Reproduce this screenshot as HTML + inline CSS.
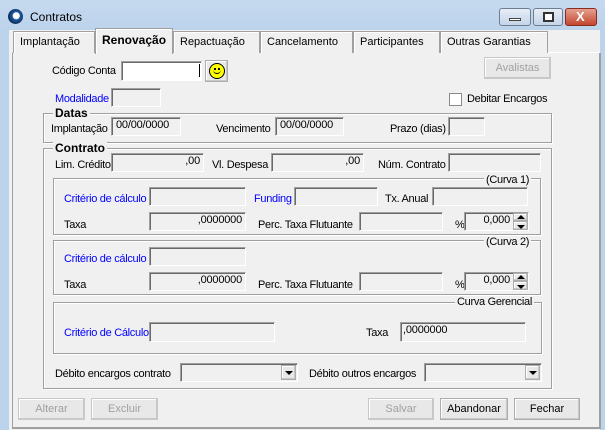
<!DOCTYPE html>
<html><head><meta charset="utf-8"><style>
*{box-sizing:border-box;margin:0;padding:0}
body{width:605px;height:430px;overflow:hidden;background:#bcd3ec;font-family:"Liberation Sans",sans-serif;font-size:11px;color:#000;position:relative}
div,span{position:absolute}
.t{white-space:nowrap;line-height:13px;letter-spacing:-0.3px}
.b{color:#0000ff}
.box{border:1px solid;border-color:#a0a0a0 #fff #fff #a0a0a0;box-shadow:inset 1px 1px 0 #696969;background:#f0f0f0;text-align:right;padding-right:3px;line-height:14px;letter-spacing:-0.2px}
.grp{border:1px solid #a0a0a0;box-shadow:1px 1px 0 #fff,inset 1px 1px 0 #fff}
.btn{border:1px solid #adadad;background:#e8e8e8;text-align:center;line-height:20px;box-shadow:inset -1px -1px 0 #c8c8c8,inset 1px 1px 0 #fff}
.dis{color:#a0a0a0;border-color:#c8c8c8}
.tab{top:31px;height:22px;border:1px solid #a0a0a0;border-bottom:none;background:#f0f0f0;padding:4px 0 0 6px;white-space:nowrap;box-shadow:inset 1px 1px 0 #fff}
.wb{top:8px;height:18px;border:1px solid #6d7d92;border-radius:3px;background:linear-gradient(#e7eef7,#c4d4e8)}
.arr{width:0;height:0;border-left:4px solid transparent;border-right:4px solid transparent}
.lg{background:#f0f0f0;padding:0 2px}
</style></head><body>
<div style="left:0;top:0;width:605px;height:30px;background:linear-gradient(#c6d9ef,#bcd3ec)"></div>
<div style="left:8px;top:9px;width:15px;height:15px;border-radius:50%;background:radial-gradient(circle at 55% 45%,#fff 0 3px,#1e5a9e 4px,#0c2c5a 8px)"></div>
<span class="t" style="left:30px;top:11px;font-size:12px;letter-spacing:0">Contratos</span>
<div class="wb" style="left:499px;width:32px"><div style="left:9px;top:9px;width:12px;height:3px;background:#fff;border:1px solid #444"></div></div>
<div class="wb" style="left:533px;width:30px"><div style="left:9px;top:3px;width:11px;height:10px;border:2px solid #333;background:#fff"></div></div>
<div class="wb" style="left:565px;width:32px;border-color:#8b2b20;background:linear-gradient(#e5a08f,#c4452f)"><span class="t" style="left:10px;top:1px;color:#fff;font-weight:bold;font-size:13px">X</span></div>
<div style="left:9px;top:30px;width:591px;height:400px;background:#f0f0f0"></div>
<div style="left:12px;top:52px;width:589px;height:377px;border:1px solid #a0a0a0;border-top-color:#fff;box-shadow:inset -1px -1px 0 #a0a0a0"></div>
<div class="tab" style="left:13px;width:82px;padding-left:6px">Implantação</div>
<div class="tab" style="left:173px;width:87px">Repactuação</div>
<div class="tab" style="left:260px;width:93px">Cancelamento</div>
<div class="tab" style="left:353px;width:87px">Participantes</div>
<div class="tab" style="left:440px;width:108px">Outras Garantias</div>
<div class="tab" style="left:95px;top:28px;height:26px;width:78px;font-weight:bold;padding-left:6px;font-size:12px;padding-top:4px">Renovação</div>

<span class="t" style="left:52px;top:65px">Código Conta</span>
<div style="left:121px;top:61px;width:81px;height:20px;background:#fff;border:1px solid;border-color:#a0a0a0 #fff #fff #a0a0a0;box-shadow:inset 1px 1px 0 #696969"></div>
<div style="left:199px;top:64px;width:1px;height:13px;background:#000"></div>
<div class="btn" style="left:205px;top:60px;width:23px;height:22px"><div style="left:3px;top:2px;width:16px;height:16px;border-radius:50%;background:#ff0;border:1px solid #000"><div style="left:4px;top:4px;width:2px;height:2px;background:#000"></div><div style="left:8px;top:4px;width:2px;height:2px;background:#000"></div><div style="left:3px;top:5px;width:8px;height:5px;border-bottom:1px solid #000;border-radius:0 0 5px 5px"></div></div></div>
<div class="btn dis" style="left:484px;top:57px;width:67px;height:22px">Avalistas</div>

<span class="t b" style="left:55px;top:93px">Modalidade</span>
<div class="box" style="left:111px;top:88px;width:50px;height:19px"></div>
<div style="left:449px;top:93px;width:13px;height:13px;background:#fff;border:1px solid #8a8a8a"></div>
<span class="t" style="left:467px;top:93px">Debitar Encargos</span>

<div class="grp" style="left:43px;top:113px;width:509px;height:30px"></div>
<span class="t lg" style="left:53px;top:107px;font-weight:bold;font-size:12px;letter-spacing:0">Datas</span>
<span class="t" style="left:51px;top:123px">Implantação</span>
<div class="box" style="left:111px;top:117px;width:70px;height:19px;text-align:left;padding-left:4px">00/00/0000</div>
<span class="t" style="left:216px;top:123px">Vencimento</span>
<div class="box" style="left:275px;top:117px;width:69px;height:19px;text-align:left;padding-left:4px">00/00/0000</div>
<span class="t" style="left:390px;top:123px">Prazo (dias)</span>
<div class="box" style="left:448px;top:117px;width:37px;height:19px"></div>

<div class="grp" style="left:43px;top:148px;width:509px;height:241px"></div>
<span class="t lg" style="left:53px;top:142px;font-weight:bold;font-size:12px;letter-spacing:0">Contrato</span>
<span class="t" style="left:55px;top:159px">Lim. Crédito</span>
<div class="box" style="left:111px;top:153px;width:93px;height:19px">,00</div>
<span class="t" style="left:212px;top:159px">Vl. Despesa</span>
<div class="box" style="left:271px;top:153px;width:93px;height:19px">,00</div>
<span class="t" style="left:378px;top:159px">Núm. Contrato</span>
<div class="box" style="left:448px;top:153px;width:93px;height:19px"></div>

<div class="grp" style="left:53px;top:178px;width:488px;height:57px"></div>
<span class="t lg" style="left:484px;top:174px">(Curva 1)</span>
<span class="t b" style="left:64px;top:193px">Critério de cálculo</span>
<div class="box" style="left:149px;top:187px;width:97px;height:19px"></div>
<span class="t b" style="left:254px;top:193px">Funding</span>
<div class="box" style="left:294px;top:187px;width:84px;height:19px"></div>
<span class="t" style="left:385px;top:193px">Tx. Anual</span>
<div class="box" style="left:432px;top:187px;width:96px;height:19px"></div>
<span class="t" style="left:64px;top:219px">Taxa</span>
<div class="box" style="left:149px;top:212px;width:97px;height:19px">,0000000</div>
<span class="t" style="left:258px;top:219px">Perc. Taxa Flutuante</span>
<div class="box" style="left:359px;top:212px;width:84px;height:19px"></div>
<span class="t" style="left:455px;top:219px">%</span>
<div class="box" style="left:464px;top:212px;width:65px;height:19px;padding-right:18px">0,000</div>
<div class="btn" style="left:513px;top:213px;width:15px;height:8px"><div class="arr" style="left:3px;top:1px;border-bottom:4px solid #000"></div></div>
<div class="btn" style="left:513px;top:221px;width:15px;height:9px"><div class="arr" style="left:3px;top:3px;border-top:4px solid #000"></div></div>

<div class="grp" style="left:53px;top:240px;width:488px;height:55px"></div>
<span class="t lg" style="left:484px;top:236px">(Curva 2)</span>
<span class="t b" style="left:64px;top:253px">Critério de cálculo</span>
<div class="box" style="left:149px;top:247px;width:97px;height:19px"></div>
<span class="t" style="left:64px;top:279px">Taxa</span>
<div class="box" style="left:149px;top:272px;width:97px;height:19px">,0000000</div>
<span class="t" style="left:258px;top:279px">Perc. Taxa Flutuante</span>
<div class="box" style="left:359px;top:272px;width:84px;height:19px"></div>
<span class="t" style="left:455px;top:279px">%</span>
<div class="box" style="left:464px;top:272px;width:65px;height:19px;padding-right:18px">0,000</div>
<div class="btn" style="left:513px;top:273px;width:15px;height:8px"><div class="arr" style="left:3px;top:1px;border-bottom:4px solid #000"></div></div>
<div class="btn" style="left:513px;top:281px;width:15px;height:9px"><div class="arr" style="left:3px;top:3px;border-top:4px solid #000"></div></div>

<div class="grp" style="left:53px;top:302px;width:489px;height:52px"></div>
<span class="t lg" style="left:455px;top:296px">Curva Gerencial</span>
<span class="t b" style="left:64px;top:327px;width:85px;overflow:hidden">Critério de Cálculo</span>
<div class="box" style="left:149px;top:322px;width:126px;height:20px"></div>
<span class="t" style="left:366px;top:327px">Taxa</span>
<div class="box" style="left:400px;top:322px;width:126px;height:20px;text-align:left;padding-left:2px">,0000000</div>

<span class="t" style="left:55px;top:368px">Débito encargos contrato</span>
<div class="box" style="left:180px;top:363px;width:118px;height:19px"></div>
<div class="btn" style="left:281px;top:365px;width:15px;height:15px"><div class="arr" style="left:3px;top:5px;border-top:4px solid #000"></div></div>
<span class="t" style="left:309px;top:368px">Débito outros encargos</span>
<div class="box" style="left:424px;top:363px;width:118px;height:19px"></div>
<div class="btn" style="left:525px;top:365px;width:15px;height:15px"><div class="arr" style="left:3px;top:5px;border-top:4px solid #000"></div></div>

<div class="btn dis" style="left:18px;top:398px;width:67px;height:22px">Alterar</div>
<div class="btn dis" style="left:91px;top:398px;width:67px;height:22px">Excluir</div>
<div class="btn dis" style="left:368px;top:398px;width:66px;height:22px">Salvar</div>
<div class="btn" style="left:440px;top:398px;width:68px;height:22px">Abandonar</div>
<div class="btn" style="left:514px;top:398px;width:66px;height:22px">Fechar</div>
</body></html>
